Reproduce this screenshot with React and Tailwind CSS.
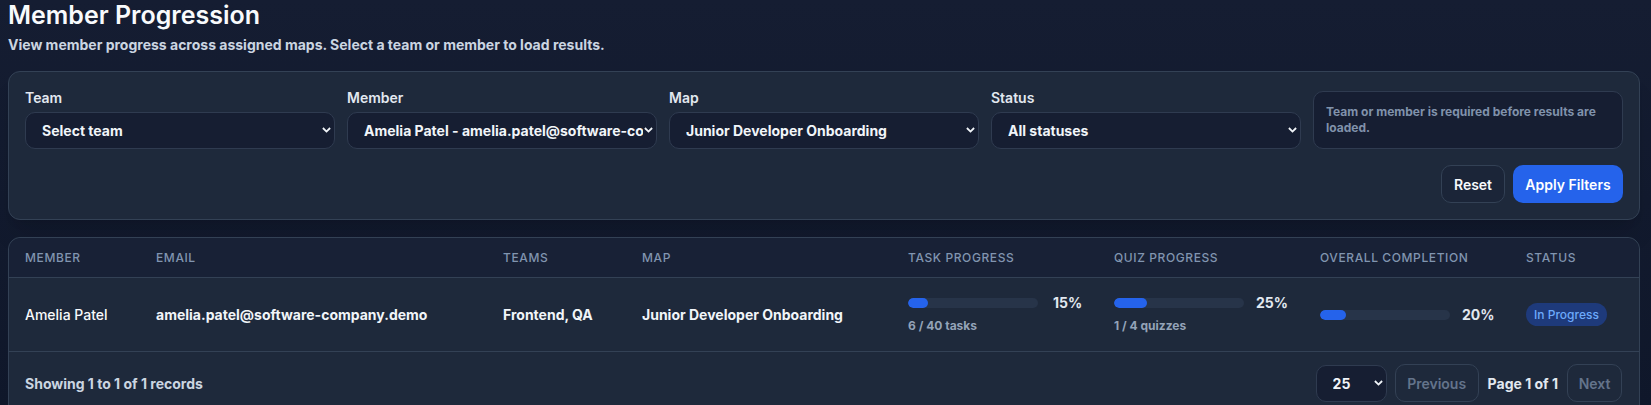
import React from "react";

const SelectBox = ({ className, value, options }) => (
  <div className={`relative ${className}`}>
    <select
      className="h-[37px] w-full appearance-none rounded-[10px] border border-[#2f3b50] bg-[#161e32] pr-[13px] pl-4 text-[14px] font-bold text-[#f1f5f9] outline-none"
      defaultValue={value}
    >
      {options.map((option) => (
        <option key={option}>{option}</option>
      ))}
    </select>
    <svg
      className="pointer-events-none absolute top-[15px] right-[4px] h-[6px] w-[9px] text-[#f1f5f9]"
      viewBox="0 0 9 6"
      fill="none"
    >
      <path d="M.9 1 4.5 4.6 8.1 1" stroke="currentColor" strokeWidth="1.8" />
    </svg>
  </div>
);

const Field = ({ label, value, options }) => (
  <div className="flex flex-col">
    <label className="mb-[5px] text-[14px] leading-[19px] font-semibold text-[#e2e8f0]">{label}</label>
    <SelectBox value={value} options={options} />
  </div>
);

const Bar = ({ percent, fill, note, gap }) => (
  <div className="flex flex-col">
    <div className="flex items-center">
      <div className="h-2.5 w-[130px] overflow-hidden rounded-full bg-[#273449]">
        <div className="h-full rounded-full bg-[#2563eb]" style={{ width: fill }} />
      </div>
      <span className={`${gap} text-[14px] leading-[20px] font-bold text-[#e2e8f0]`}>{percent}%</span>
    </div>
    {note && <div className="mt-[3px] text-[12px] leading-[20px] font-bold text-[#94a3b8]">{note}</div>}
  </div>
);

const gridCols = "grid grid-cols-[131px_347px_139px_266px_206px_206px_206px_1fr] pl-4";

export default function App() {
  return (
    <div className="h-[405px] overflow-hidden bg-gradient-to-b from-[#151d32] to-[#0f172a] pr-[11px] pl-2 font-['Inter',sans-serif]">
      <h1 className="text-[25px] leading-[30px] font-semibold text-[#f8fafc]">Member Progression</h1>
      <p className="mt-[5px] text-[14px] leading-[20px] font-bold text-[#cbd5e1]">
        View member progress across assigned maps. Select a team or member to load results.
      </p>

      <section className="mt-[16px] rounded-xl border border-[#334155] bg-[#1e293b] p-4 shadow-xl">
        <div className="grid grid-cols-5 items-end gap-3">
          <Field label="Team" value="Select team" options={["Select team", "Frontend", "QA"]} />
          <Field
            label="Member"
            value="Amelia Patel - amelia.patel@software-company.demo"
            options={["Amelia Patel - amelia.patel@software-company.demo"]}
          />
          <Field label="Map" value="Junior Developer Onboarding" options={["Junior Developer Onboarding"]} />
          <Field label="Status" value="All statuses" options={["All statuses", "In Progress"]} />
          <div className="flex h-[58px] items-center rounded-[10px] border border-[#2f3b50] bg-[#161e32] px-3 text-[12px] leading-4 font-bold text-[#8092ab]">
            Team or member is required before results are loaded.
          </div>
        </div>
        <div className="mt-4 flex justify-end gap-2">
          <button className="h-[38px] w-16 rounded-[10px] border border-[#334155] bg-[#1b2538] text-[14px] font-semibold text-[#f8fafc]">
            Reset
          </button>
          <button className="h-[38px] w-[110px] rounded-[10px] bg-[#2563eb] text-[14px] font-semibold text-white">
            Apply Filters
          </button>
        </div>
      </section>

      <section className="mt-[17px] rounded-t-xl border border-[#334155] bg-[#1e293b] pb-6">
        <div className={`${gridCols} h-10 items-center rounded-t-xl border-b border-[#334155] bg-[#182136] text-[12px] font-medium tracking-[0.05em] text-[#8195b0]`}>
          <div>MEMBER</div>
          <div>EMAIL</div>
          <div>TEAMS</div>
          <div>MAP</div>
          <div>TASK PROGRESS</div>
          <div>QUIZ PROGRESS</div>
          <div>OVERALL COMPLETION</div>
          <div>STATUS</div>
        </div>
        <div className={`${gridCols} h-[74px] items-center border-b border-[#334155] text-[14px] font-bold`}>
          <div className="font-medium text-[#f8fafc]">Amelia Patel</div>
          <div className="text-[#f1f5f9]">amelia.patel@software-company.demo</div>
          <div className="text-[#f1f5f9]">Frontend, QA</div>
          <div className="text-[#f1f5f9]">Junior Developer Onboarding</div>
          <Bar percent={15} fill="15%" note="6 / 40 tasks" gap="ml-[15px]" />
          <Bar percent={25} fill="25%" note="1 / 4 quizzes" gap="ml-3" />
          <Bar percent={20} fill="20%" gap="ml-3" />
          <div>
            <span className="inline-flex h-[23px] w-[81px] items-center justify-center rounded-full bg-[#1e3a7b] text-[12px] font-medium text-[#6daafb]">
              In Progress
            </span>
          </div>
        </div>
        <div className="flex items-center justify-between pt-[12px] pr-[17px] pl-4">
          <div className="text-[14px] font-bold text-[#cbd5e1]">Showing 1 to 1 of 1 records</div>
          <div className="flex items-center">
            <SelectBox className="w-[71px]" value="25" options={["10", "25", "50"]} />
            <button disabled className="ml-2 h-[38px] w-[84px] rounded-[10px] border border-[#334155] text-[14px] font-semibold text-[#64748b]">
              Previous
            </button>
            <span className="mx-[9px] text-[14px] font-bold text-[#e2e8f0]">Page 1 of 1</span>
            <button disabled className="h-[38px] w-[55px] rounded-[10px] border border-[#334155] text-[14px] font-semibold text-[#64748b]">
              Next
            </button>
          </div>
        </div>
      </section>
    </div>
  );
}
